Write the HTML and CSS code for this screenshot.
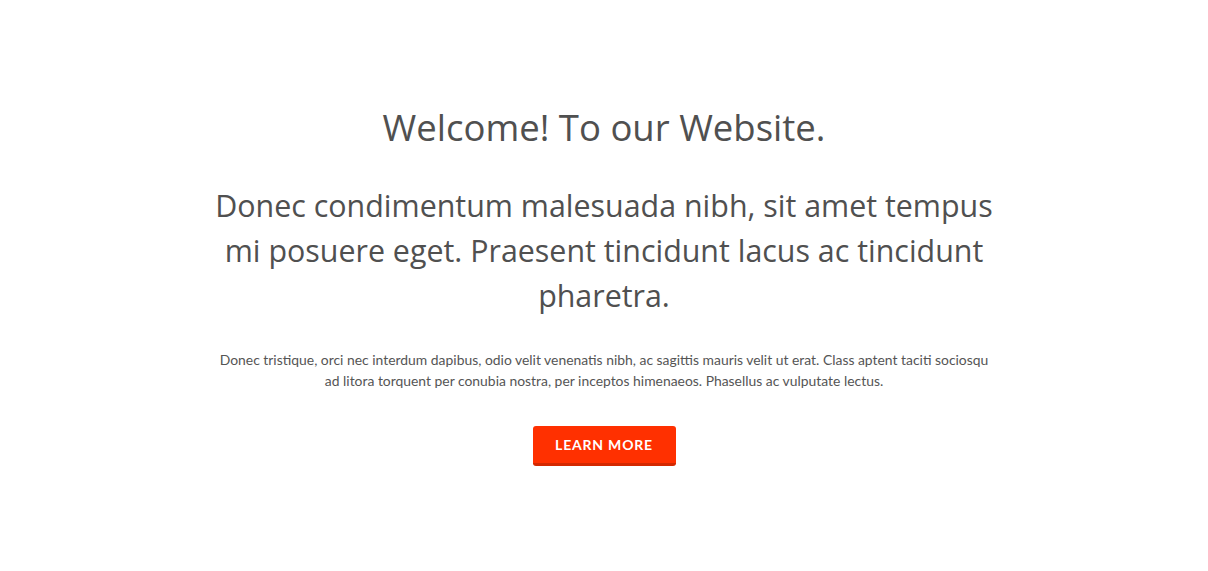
FILE: index.html
```html
<!DOCTYPE html>
<html>
<head>
<meta charset="utf-8">
<link rel="stylesheet" href="styles.css">
</head>
<body>
<section class="hero">
  <h1 class="title">Welcome! To our Website.</h1>
  <h2 class="lead">Donec condimentum malesuada nibh, sit amet tempus mi posuere eget. Praesent tincidunt lacus ac tincidunt pharetra.</h2>
  <p class="text">Donec tristique, orci nec interdum dapibus, odio velit venenatis nibh, ac sagittis mauris velit ut erat. Class aptent taciti sociosqu ad litora torquent per conubia nostra, per inceptos himenaeos. Phasellus ac vulputate lectus.</p>
  <a class="btn" href="#">LEARN MORE</a>
</section>
</body>
</html>
```
FILE: styles.css
```css
html, body {
  margin: 0;
  padding: 0;
  background: #fff;
}
.hero {
  display: flex;
  flex-direction: column;
  align-items: center;
  text-align: center;
  padding-top: 103px;
  color: #505050;
}
.title {
  margin: 0;
  font-family: "Open Sans", "Noto Sans", sans-serif;
  font-weight: 400;
  font-size: 36.5px;
  line-height: 48px;
}
.lead {
  margin: 32px 0 0;
  width: 795px;
  font-family: "Open Sans", "Noto Sans", sans-serif;
  font-weight: 400;
  font-size: 30.4px;
  line-height: 45px;
}
.text {
  margin: 31px 0 0;
  width: 780px;
  font-family: Lato, "Liberation Sans", sans-serif;
  font-size: 13.9px;
  line-height: 21px;
  color: #555;
}
.btn {
  margin-top: 35px;
  display: flex;
  align-items: center;
  justify-content: center;
  width: 143px;
  height: 37px;
  box-sizing: content-box;
  background: #ff3000;
  border-bottom: 3px solid #d42800;
  border-radius: 3px;
  color: #fff;
  text-decoration: none;
  font-family: Lato, "Liberation Sans", sans-serif;
  font-weight: 700;
  font-size: 14px;
  letter-spacing: 0.8px;
}
```
